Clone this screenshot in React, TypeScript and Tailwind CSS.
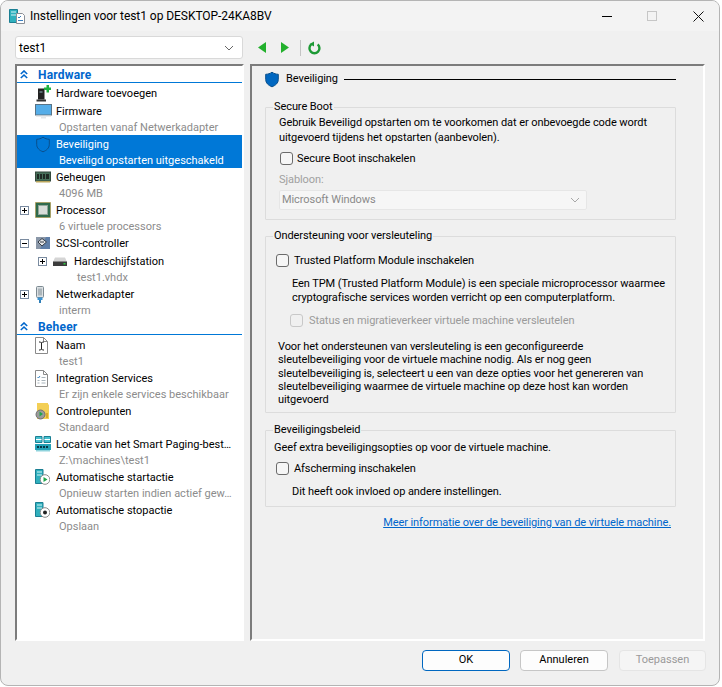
import type { ReactNode } from "react";

const font = { fontFamily: "Roboto, 'Liberation Sans', sans-serif" };

function Shield({ fill, stroke }: { fill: string; stroke: string }) {
  return (
    <svg width="16" height="17" viewBox="0 0 16 17">
      <path d="M8 1.200c2 1.400 4 2 6.300 2.100v5.200c0 3.400-2.600 5.900-6.300 7.300-3.700-1.400-6.300-3.900-6.300-7.300V3.300C4 3.200 6 2.600 8 1.200z" fill={fill} stroke={stroke} strokeWidth="1" />
    </svg>
  );
}

function AddHardwareIcon() {
  return (
    <svg width="16" height="17" viewBox="0 0 16 17">
      <path d="M3 3.500h6.500v11H3z" fill="#222" />
      <path d="M1.500 14.500h9.500v2H1.500z" fill="#333" />
      <path d="M4.500 6h3v2h-3z" fill="#5a6a70" />
      <path d="M9 2.500h2.500V0H14v2.500h2V5h-2v2.500h-2.500V5H9z" fill="#1fb141" />
    </svg>
  );
}

function FirmwareIcon() {
  return (
    <svg width="17" height="15" viewBox="0 0 17 15">
      <rect x="0.500" y="0.500" width="16" height="10.500" fill="#55ade8" stroke="#5a7385" />
      <path d="M1 11.500h15v1H1z" fill="#cfd6da" />
      <path d="M6 13h5v1.500H6z" fill="#e4e7e9" />
    </svg>
  );
}

function MemoryIcon() {
  return (
    <svg width="16" height="12" viewBox="0 0 16 12">
      <rect x="0.500" y="1" width="15" height="9" fill="#47705a" stroke="#33483c" />
      <path d="M2 3h2v5H2zM5 3h2v5H5zM8 3h2v5H8zM11 3h3v5h-3z" fill="#1f2a24" />
      <path d="M1 10h14v1.500H1z" fill="#b9a55c" />
    </svg>
  );
}

function CpuIcon() {
  return (
    <svg width="16" height="16" viewBox="0 0 16 16">
      <rect x="0.500" y="0.500" width="15" height="15" fill="#2f6a4c" stroke="#b58d2e" strokeDasharray="1 1" />
      <rect x="3.500" y="3.500" width="9" height="9" fill="#d7dcd8" stroke="#8fa59a" />
    </svg>
  );
}

function ScsiIcon() {
  return (
    <svg width="16" height="14" viewBox="0 0 16 14">
      <path d="M1 1h14v12H1z" fill="#5f7fa8" />
      <path d="M1 1h10L5 13H1z" fill="#8a97a8" />
      <path d="M7 2.500l4.500 3.500L7 10 3 6z" fill="#e6e8ea" stroke="#333b45" />
      <path d="M5 6h4" stroke="#333b45" />
    </svg>
  );
}

function DiskIcon() {
  return (
    <svg width="14" height="9" viewBox="0 0 14 9">
      <path d="M2 0.500h10L14 5H0z" fill="#d5d5d5" />
      <path d="M0 4.500h14V9H0z" fill="#3c3c3c" />
      <path d="M10.500 6h2v1.500h-2z" fill="#2ecc40" />
    </svg>
  );
}

function NicIcon() {
  return (
    <svg width="10" height="17" viewBox="0 0 10 17">
      <rect x="1.500" y="0.500" width="7" height="11" rx="1" fill="#dbe0e3" stroke="#7d8a92" />
      <path d="M3.500 2.500h1v7h-1zM5.500 2.500h1v7h-1z" fill="#7d8a92" />
      <path d="M2.500 11.500h5V14h-5z" fill="#3b93d3" />
      <path d="M4 14h2v3H4z" fill="#2f7fb8" />
    </svg>
  );
}

function NameIcon() {
  return (
    <svg width="13" height="17" viewBox="0 0 13 17">
      <path d="M0.500 0.500h8l4 4v12h-12z" fill="#fff" stroke="#8a8a8a" />
      <path d="M8.500 0.500v4h4" fill="none" stroke="#8a8a8a" />
      <path d="M4 5h1.500l1 1 1-1H9M6.500 6v6M4 13h1.500l1-1 1 1H9" fill="none" stroke="#222" />
    </svg>
  );
}

function ServicesIcon() {
  return (
    <svg width="13" height="17" viewBox="0 0 13 17">
      <path d="M0.500 0.500h8l4 4v12h-12z" fill="#fff" stroke="#8a8a8a" />
      <path d="M8.500 0.500v4h4" fill="none" stroke="#8a8a8a" />
      <path d="M2.500 7l1 1 1.500-2" fill="none" stroke="#2f7fc1" />
      <path d="M6.500 7.500h4M2.500 10.500h2M6.500 10.500h4M2.500 13h2M6.500 13h4" stroke="#a9b4bb" />
    </svg>
  );
}

function CheckpointIcon() {
  return (
    <svg width="15" height="17" viewBox="0 0 15 17">
      <path d="M2 0h11v1l1 1v14H2z" fill="#f3cf55" />
      <path d="M11 10h2v5h-2z" fill="#d9a92c" />
      <circle cx="5.500" cy="11.500" r="4.500" fill="#9b9b9b" stroke="#6f6f6f" />
      <path d="M4.500 8.500l3.500 2.500-3.500 2.500z" fill="#1fa64a" />
    </svg>
  );
}

function PagingIcon() {
  return (
    <svg width="16" height="16" viewBox="0 0 16 16">
      <path d="M0.500 0.500h6.500v6H0.500zM9 0.500h6.500v6H9z" fill="#45c0cf" stroke="#1b7f93" />
      <path d="M1 3.500h5.500M9.500 3.500H15" stroke="#fff" />
      <path d="M0 8h16v6H0z" fill="#23a0b5" />
      <path d="M2 10h2v2H2zM5 10h2v2H5zM8 10h2v2H8zM11 10h2v2h-2z" fill="#063746" />
      <path d="M1 14h14v1.500H1z" fill="#8fd3dc" />
    </svg>
  );
}

function AutoIcon({ stop }: { stop?: boolean }) {
  return (
    <svg width="15" height="16" viewBox="0 0 15 16">
      <path d="M0.500 0.500h7.500v14H0.500z" fill="#2fb0bd" stroke="#1b7f93" />
      <path d="M2 3h5M2 6h5" stroke="#d6f3f6" />
      <circle cx="10" cy="10.500" r="4.800" fill="#fff" stroke="#8a8a8a" />
      {stop ? (
        <circle cx="10" cy="10.500" r="2" fill="#222" />
      ) : (
        <path d="M8.500 8l4 2.500-4 2.500z" fill="#1fa64a" />
      )}
    </svg>
  );
}

function Expander({ open }: { open?: boolean }) {
  return (
    <span className="flex h-[9px] w-[9px] items-center justify-center border border-[#7a8ba0] bg-white">
      <svg width="7" height="7" viewBox="0 0 7 7">
        <path d={open ? "M1 3.500h5" : "M1 3.500h5M3.500 1v5"} stroke="#000" strokeWidth="1" />
      </svg>
    </span>
  );
}

function TreeHeader({ label }: { label: string }) {
  return (
    <div className="mb-px flex h-[17px] items-center border-b border-[#0078d7] pt-px">
      <svg className="ml-[3px]" width="8" height="9" viewBox="0 0 8 9">
        <path d="M0.800 4L4 1l3.200 3M0.800 8L4 5l3.200 3" fill="none" stroke="#0066cc" strokeWidth="1.600" />
      </svg>
      <span className="ml-[10px] text-[12px] font-bold tracking-[0.2px] text-[#0066cc]">{label}</span>
    </div>
  );
}

type RowProps = {
  icon: ReactNode;
  name: string;
  sub?: string;
  expander?: "open" | "closed";
  nested?: boolean;
  selected?: boolean;
};

function TreeRow({ icon, name, sub, expander, nested, selected }: RowProps) {
  return (
    <div className={`${sub ? "h-[33px]" : "h-[18px]"} ${nested ? "pl-[21px]" : "pl-[3px]"} ${selected ? "bg-[#0078d7] text-white" : "text-black"} flex items-start`}>
      <div className="flex h-[18px] w-[15px] shrink-0 items-center">
        {expander && <Expander open={expander === "open"} />}
      </div>
      <div className="flex h-[18px] w-[21px] shrink-0 items-center">{icon}</div>
      <div className="min-w-0 text-[11px]">
        <div className="h-[18px] whitespace-nowrap leading-[20px]">{name}</div>
        {sub && (
          <div className={`ml-[3px] h-[15px] whitespace-nowrap leading-[15px] ${selected ? "text-white" : "text-[#8c8c8c]"}`}>
            {sub}
          </div>
        )}
      </div>
    </div>
  );
}

function Check({ disabled }: { disabled?: boolean }) {
  return (
    <span className={`block h-[13px] w-[13px] shrink-0 rounded-[3px] border ${disabled ? "border-[#c8c8c8] bg-[#f0f0f0]" : "border-[#6b6b6b] bg-[#f6f6f6]"}`} />
  );
}

function Group({ title, children, className, inset }: { title: string; children: ReactNode; className?: string; inset: string }) {
  return (
    <fieldset className={`rounded-[1px] border border-[#dcdcdc] ${className ?? ""}`}>
      <legend className="ml-[7px] px-px text-[11px] leading-[14px] text-black">{title}</legend>
      <div className={inset}>{children}</div>
    </fieldset>
  );
}

export default function App() {
  return (
    <div className="h-[687px] w-[722px] overflow-hidden bg-white" style={font}>
      <div className="flex h-[686px] w-[720px] flex-col overflow-hidden rounded-[8px] border border-[#b4b4b4] bg-[#f0f0f0] text-[11px] text-black">
        {/* title bar */}
        <div className="flex h-[30px] shrink-0 items-center bg-[#f3f3f3] pl-[8px]">
          <svg width="16" height="16" viewBox="0 0 16 16">
            <path d="M0.500 1.500h8v13h-8z" fill="#2fb0bd" stroke="#1b7f93" />
            <path d="M2 4h5M2 7h5" stroke="#d6f3f6" />
            <path d="M7.500 5.500h6l2 2v8h-8z" fill="#fff" stroke="#8a8f96" />
            <path d="M9 9l1 1 2-2M9 12.500h5" fill="none" stroke="#3a7fc1" />
          </svg>
          <span className="ml-[5px] text-[12px] tracking-[-0.05px]">Instellingen voor test1 op DESKTOP-24KA8BV</span>
          <div className="ml-auto flex items-center pr-[15px]">
            <span className="h-px w-[10px] bg-black" />
            <span className="ml-[35px] h-[10px] w-[10px] border border-[#c6c6c6]" />
            <svg className="ml-[36px]" width="11" height="11" viewBox="0 0 11 11">
              <path d="M0.500 0.500l10 10M10.500 0.500l-10 10" stroke="#111" strokeWidth="1" />
            </svg>
          </div>
        </div>

        {/* toolbar */}
        <div className="flex h-[33px] shrink-0 items-start pl-[14px] pt-[5px]">
          <div className="flex h-[23px] w-[228px] items-center justify-between rounded-[3px] border border-[#d9d9d9] bg-white pl-[3px] pr-[8px] text-[12px]">
            <span>test1</span>
            <svg width="10" height="6" viewBox="0 0 10 6">
              <path d="M1 1l4 4 4-4" fill="none" stroke="#666" />
            </svg>
          </div>
          <div className="ml-[15px] flex h-[23px] items-center">
            <svg width="8" height="11" viewBox="0 0 8 11"><path d="M8 0v11L0 5.500z" fill="#22b02c" /></svg>
            <svg className="ml-[15px]" width="8" height="11" viewBox="0 0 8 11"><path d="M0 0v11l8-5.500z" fill="#22b02c" /></svg>
            <span className="ml-[11px] h-[16px] w-px bg-[#c4c4c4]" />
            <svg className="ml-[7px]" width="13" height="14" viewBox="0 0 13 14">
              <path d="M3.200 3.400a5 5 0 1 0 6.500 0" fill="none" stroke="#1d9a35" strokeWidth="2.400" />
              <path d="M6 0.500v5L1.500 3z" fill="#1d9a35" />
            </svg>
          </div>
        </div>

        {/* main */}
        <div className="flex shrink-0 pl-[14px]">
          <div className="h-[577px] w-[229px] border-2 border-b-white border-l-[#7c7c7c] border-r-white border-t-[#7c7c7c] bg-white">
            <TreeHeader label="Hardware" />
            <TreeRow icon={<AddHardwareIcon />} name="Hardware toevoegen" />
            <TreeRow icon={<FirmwareIcon />} name="Firmware" sub="Opstarten vanaf Netwerkadapter" />
            <TreeRow icon={<Shield fill="#0078d7" stroke="#0b4f8a" />} name="Beveiliging" sub="Beveiligd opstarten uitgeschakeld" selected />
            <TreeRow icon={<MemoryIcon />} name="Geheugen" sub="4096 MB" />
            <TreeRow icon={<CpuIcon />} name="Processor" sub="6 virtuele processors" expander="closed" />
            <TreeRow icon={<ScsiIcon />} name="SCSI-controller" expander="open" />
            <TreeRow icon={<DiskIcon />} name="Hardeschijfstation" sub="test1.vhdx" expander="closed" nested />
            <TreeRow icon={<NicIcon />} name="Netwerkadapter" sub="interm" expander="closed" />
            <TreeHeader label="Beheer" />
            <TreeRow icon={<NameIcon />} name="Naam" sub="test1" />
            <TreeRow icon={<ServicesIcon />} name="Integration Services" sub="Er zijn enkele services beschikbaar" />
            <TreeRow icon={<CheckpointIcon />} name="Controlepunten" sub="Standaard" />
            <TreeRow icon={<PagingIcon />} name="Locatie van het Smart Paging-best…" sub="Z:\machines\test1" />
            <TreeRow icon={<AutoIcon />} name="Automatische startactie" sub="Opnieuw starten indien actief gew…" />
            <TreeRow icon={<AutoIcon stop />} name="Automatische stopactie" sub="Opslaan" />
          </div>

          <div className="ml-[6px] h-[577px] w-[455px] border-2 border-b-white border-l-[#7c7c7c] border-r-white border-t-[#7c7c7c] pl-[13px] pr-[27px] pt-[5px] tracking-[-0.08px]">
            <div className="-ml-px flex h-[17px] items-center">
              <Shield fill="#0067c0" stroke="#0b4f8a" />
              <span className="ml-[6px] mr-[6px]">Beveiliging</span>
              <span className="h-px flex-1 bg-black" />
            </div>

            <Group title="Secure Boot" className="mt-[12px] h-[120px]" inset="pl-[13px]">
              <div className="mt-[1px] leading-[15px]">
                Gebruik Beveiligd opstarten om te voorkomen dat er onbevoegde code wordt
                <br />
                uitgevoerd tijdens het opstarten (aanbevolen).
              </div>
              <div className="mt-[6px] flex items-center gap-[4px] pl-px leading-[15px]">
                <Check />
                <span>Secure Boot inschakelen</span>
              </div>
              <div className="mt-[6px] leading-[15px] text-[#a0a0a0]">Sjabloon:</div>
              <div className="mt-[3px] flex h-[20px] w-[308px] items-center justify-between rounded-[2px] border border-[#e6e6e6] bg-[#f6f6f6] pl-[2px] pr-[6px] text-[#8a8a8a]">
                <span>Microsoft Windows</span>
                <svg width="10" height="6" viewBox="0 0 10 6">
                  <path d="M1 1l4 4 4-4" fill="none" stroke="#a8a8a8" />
                </svg>
              </div>
            </Group>

            <Group title="Ondersteuning voor versleuteling" className="mt-[9px] h-[184px]" inset="pl-[10px]">
              <div className="mt-[10px] flex items-center gap-[5px] leading-[15px]">
                <Check />
                <span>Trusted Platform Module inschakelen</span>
              </div>
              <div className="ml-[16px] mt-[9px] leading-[14px]">
                Een TPM (Trusted Platform Module) is een speciale microprocessor waarmee
                <br />
                cryptografische services worden verricht op een computerplatform.
              </div>
              <div className="ml-[14px] mt-[8px] flex items-center gap-[6px] leading-[15px] text-[#9a9a9a]">
                <Check disabled />
                <span>Status en migratieverkeer virtuele machine versleutelen</span>
              </div>
              <div className="ml-[2px] mt-[12px] leading-[13.250px]">
                Voor het ondersteunen van versleuteling is een geconfigureerde
                <br />
                sleutelbeveiliging voor de virtuele machine nodig. Als er nog geen
                <br />
                sleutelbeveiliging is, selecteert u een van deze opties voor het genereren van
                <br />
                sleutelbeveiliging waarmee de virtuele machine op deze host kan worden
                <br />
                uitgevoerd
              </div>
            </Group>

            <Group title="Beveiligingsbeleid" className="mt-[10px] h-[84px]" inset="pl-[8px]">
              <div className="mt-[3px] leading-[15px]">Geef extra beveiligingsopties op voor de virtuele machine.</div>
              <div className="ml-[2px] mt-[6px] flex items-center gap-[5px] leading-[15px]">
                <Check />
                <span>Afscherming inschakelen</span>
              </div>
              <div className="ml-[18px] mt-[8px] leading-[15px]">Dit heeft ook invloed op andere instellingen.</div>
            </Group>

            <div className="mt-[8px] pr-[5px] text-right leading-[15px]">
              <a className="text-[#0066cc] underline" href="#">Meer informatie over de beveiliging van de virtuele machine.</a>
            </div>
          </div>
        </div>

        {/* buttons */}
        <div className="flex flex-1 items-start justify-end gap-[10px] pr-[13px] pt-[9px]">
          <button className="h-[21px] w-[88px] rounded-[4px] border border-[#0067c0] bg-[#fdfdfd]">OK</button>
          <button className="h-[21px] w-[88px] rounded-[4px] border border-[#c6c6c6] bg-[#fdfdfd]">Annuleren</button>
          <button className="ml-px h-[21px] w-[87px] rounded-[4px] border border-[#e5e5e5] bg-[#f5f5f5] text-[#9a9a9a]">Toepassen</button>
        </div>
      </div>
    </div>
  );
}
